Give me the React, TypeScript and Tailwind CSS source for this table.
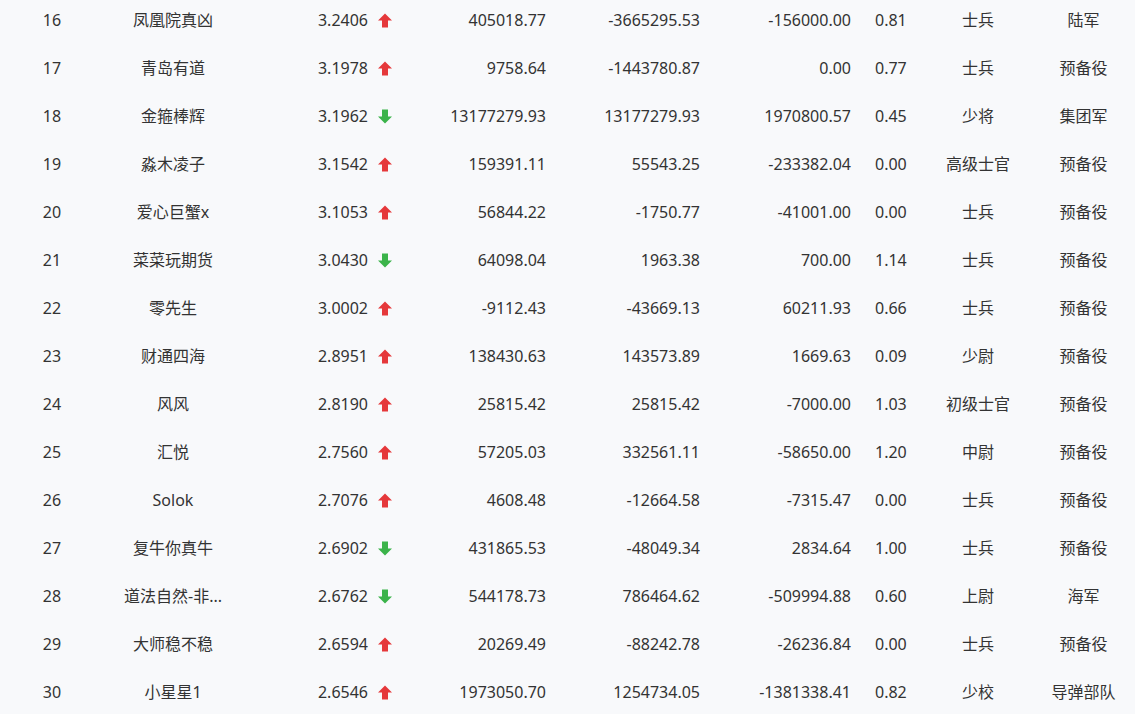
const rows = [
  { rank: 16, name: "凤凰院真凶", score: "3.2406", up: true, a: "405018.77", b: "-3665295.53", c: "-156000.00", d: "0.81", level: "士兵", army: "陆军" },
  { rank: 17, name: "青岛有道", score: "3.1978", up: true, a: "9758.64", b: "-1443780.87", c: "0.00", d: "0.77", level: "士兵", army: "预备役" },
  { rank: 18, name: "金箍棒辉", score: "3.1962", up: false, a: "13177279.93", b: "13177279.93", c: "1970800.57", d: "0.45", level: "少将", army: "集团军" },
  { rank: 19, name: "淼木凌子", score: "3.1542", up: true, a: "159391.11", b: "55543.25", c: "-233382.04", d: "0.00", level: "高级士官", army: "预备役" },
  { rank: 20, name: "爱心巨蟹x", score: "3.1053", up: true, a: "56844.22", b: "-1750.77", c: "-41001.00", d: "0.00", level: "士兵", army: "预备役" },
  { rank: 21, name: "菜菜玩期货", score: "3.0430", up: false, a: "64098.04", b: "1963.38", c: "700.00", d: "1.14", level: "士兵", army: "预备役" },
  { rank: 22, name: "零先生", score: "3.0002", up: true, a: "-9112.43", b: "-43669.13", c: "60211.93", d: "0.66", level: "士兵", army: "预备役" },
  { rank: 23, name: "财通四海", score: "2.8951", up: true, a: "138430.63", b: "143573.89", c: "1669.63", d: "0.09", level: "少尉", army: "预备役" },
  { rank: 24, name: "风风", score: "2.8190", up: true, a: "25815.42", b: "25815.42", c: "-7000.00", d: "1.03", level: "初级士官", army: "预备役" },
  { rank: 25, name: "汇悦", score: "2.7560", up: true, a: "57205.03", b: "332561.11", c: "-58650.00", d: "1.20", level: "中尉", army: "预备役" },
  { rank: 26, name: "Solok", score: "2.7076", up: true, a: "4608.48", b: "-12664.58", c: "-7315.47", d: "0.00", level: "士兵", army: "预备役" },
  { rank: 27, name: "复牛你真牛", score: "2.6902", up: false, a: "431865.53", b: "-48049.34", c: "2834.64", d: "1.00", level: "士兵", army: "预备役" },
  { rank: 28, name: "道法自然-非...", score: "2.6762", up: false, a: "544178.73", b: "786464.62", c: "-509994.88", d: "0.60", level: "上尉", army: "海军" },
  { rank: 29, name: "大师稳不稳", score: "2.6594", up: true, a: "20269.49", b: "-88242.78", c: "-26236.84", d: "0.00", level: "士兵", army: "预备役" },
  { rank: 30, name: "小星星1", score: "2.6546", up: true, a: "1973050.70", b: "1254734.05", c: "-1381338.41", d: "0.82", level: "少校", army: "导弹部队" },
];

// red up / green down block arrow
function Arrow({ up }: { up: boolean }) {
  return (
    <svg width="14" height="15" viewBox="0 0 14 15" className={up ? "fill-[#e5383b]" : "fill-[#3bb34a] rotate-180"}>
      <path d="M7 0.5 L14 7.5 L10 7.5 L10 14.5 L4 14.5 L4 7.5 L0 7.5 Z" />
    </svg>
  );
}

export default function App() {
  return (
    <div
      className="w-[1135px] h-[714px] overflow-hidden bg-[#f8f9fb] text-[16px] text-[#333]"
      style={{ fontFamily: '"Noto Sans", "Noto Sans CJK SC", sans-serif' }}
    >
      <div className="-mt-1">
        {rows.map((r) => (
          <div key={r.rank} className="flex items-center h-12">
            <div className="w-[104px] text-center">{r.rank}</div>
            <div className="w-[138px] text-center whitespace-nowrap">{r.name}</div>
            <div className="w-[126px] text-right">{r.score}</div>
            <div className="w-[39px] pl-[10px] flex items-center">
              <Arrow up={r.up} />
            </div>
            <div className="w-[139px] text-right">{r.a}</div>
            <div className="w-[154px] text-right">{r.b}</div>
            <div className="w-[151px] text-right">{r.c}</div>
            <div className="w-[73px] pl-[24px]">{r.d}</div>
            <div className="w-[108px] text-center">{r.level}</div>
            <div className="w-[103px] text-center">{r.army}</div>
          </div>
        ))}
      </div>
    </div>
  );
}
